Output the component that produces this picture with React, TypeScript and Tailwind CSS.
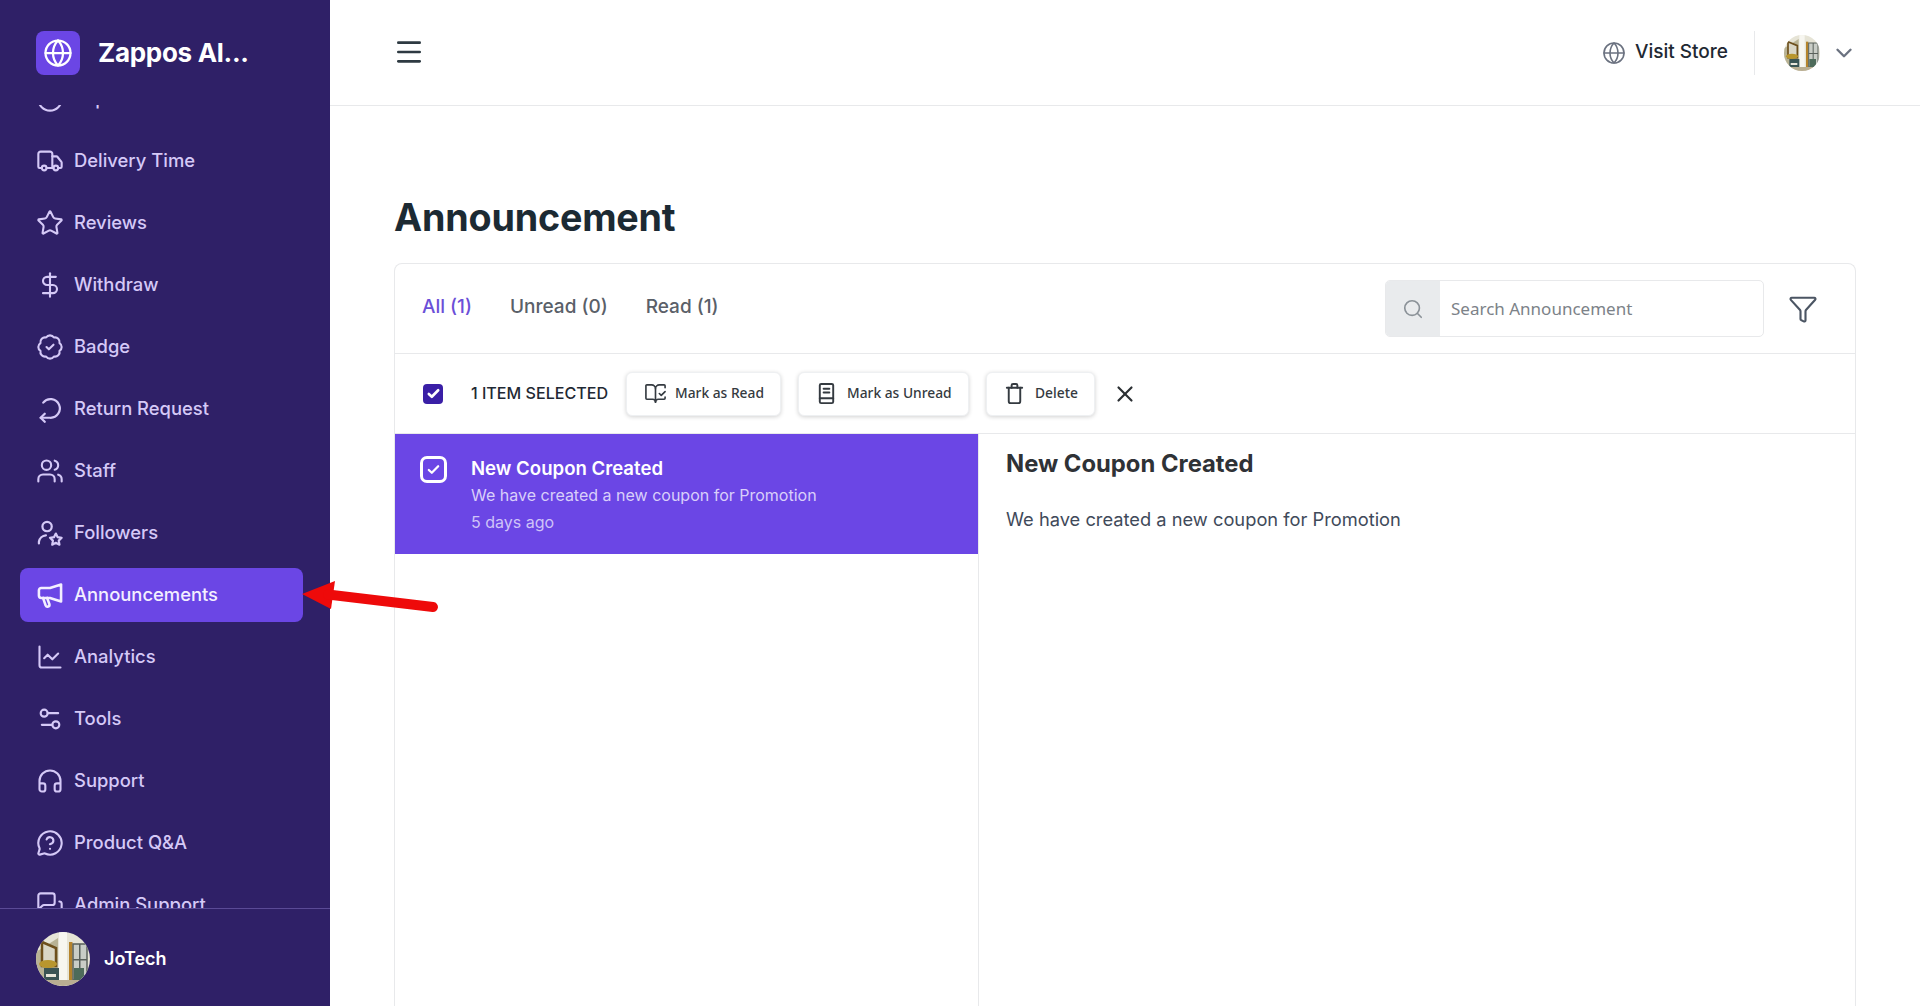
import {
  BadgeCheck,
  BookOpenCheck,
  ChartLine,
  ChevronDown,
  Circle,
  DollarSign,
  Funnel,
  Globe,
  Headphones,
  Menu,
  MessageCircleQuestion,
  MessagesSquare,
  Search,
  Settings2,
  Star,
  Truck,
  Users,
  X,
} from "lucide-react";
import type { ReactNode } from "react";

const ReturnIcon = ({ className }: { className?: string }) => (
  <svg className={className} viewBox="0 0 24 24" fill="none" stroke="currentColor" strokeWidth="1.900" strokeLinecap="round" strokeLinejoin="round">
    <path d="M6.200 6.500A8 8 0 1 1 12 19.500H4" />
    <path d="m7.500 16-3.500 3.500L7.500 23" />
  </svg>
);

const FollowersIcon = ({ className }: { className?: string }) => (
  <svg className={className} viewBox="0 0 24 24" fill="none" stroke="currentColor" strokeWidth="1.900" strokeLinecap="round" strokeLinejoin="round">
    <circle cx="9.500" cy="6.500" r="4" />
    <path d="M2.500 21v-1.500a6.500 6.500 0 0 1 6-5.500" />
    <path d="m17 12.500 1.600 3.100 3.400.5-2.500 2.400.6 3.500-3.100-1.600-3.100 1.600.6-3.500-2.500-2.400 3.400-.5z" />
  </svg>
);

const MegaphoneIcon = ({ className }: { className?: string }) => (
  <svg className={className} viewBox="0 0 24 24" fill="none" stroke="currentColor" strokeWidth="2.200" strokeLinecap="round" strokeLinejoin="round">
    <path d="M21.500 3v14.500L12 14.500H4.500A2 2 0 0 1 2.500 12.500V8a2 2 0 0 1 2-2H12z" />
    <path d="m6 14.500 2.300 6.500a1.700 1.700 0 0 0 3.200-1.100L9.500 14.500" />
  </svg>
);

const NoteBookIcon = ({ className }: { className?: string }) => (
  <svg className={className} viewBox="0 0 24 24" fill="none" stroke="currentColor" strokeWidth="2" strokeLinecap="round" strokeLinejoin="round">
    <path d="M6.500 2h11A1.500 1.500 0 0 1 19 3.500v17a1.500 1.500 0 0 1-1.500 1.500h-11A1.500 1.500 0 0 1 5 20.500v-17A1.500 1.500 0 0 1 6.500 2z" />
    <path d="M5 17h14" />
    <path d="M9 7h6" />
    <path d="M9 11h6" />
  </svg>
);

const TrashIcon = ({ className }: { className?: string }) => (
  <svg className={className} viewBox="0 0 24 24" fill="none" stroke="currentColor" strokeWidth="2" strokeLinecap="round" strokeLinejoin="round">
    <path d="M4 6h16" />
    <path d="M9 6V3.500A1.500 1.500 0 0 1 10.500 2h3A1.500 1.500 0 0 1 15 3.500V6" />
    <path d="M6 6v14a2 2 0 0 0 2 2h8a2 2 0 0 0 2-2V6" />
  </svg>
);

// small stand-in for the store owner's room photo
const RoomAvatar = ({ className, id }: { className?: string; id: string }) => (
  <svg className={className} viewBox="0 0 54 54">
    <defs>
      <clipPath id={id}>
        <circle cx="27" cy="27" r="27" />
      </clipPath>
    </defs>
    <g clipPath={`url(#${id})`}>
      <rect width="54" height="54" fill="#e6e4d6" />
      <path d="M0 20 22 6v44H0z" fill="#b8b294" />
      <path d="M6 10 20 16v18H6z" fill="#d9d6c6" stroke="#6d4f1c" strokeWidth="2.500" />
      <rect x="23" y="0" width="8" height="54" fill="#f7f6f0" />
      <rect x="33" y="10" width="3.500" height="42" fill="#b5842c" />
      <rect x="37" y="12" width="14" height="36" fill="#c9cdc6" stroke="#59605a" strokeWidth="1.500" />
      <rect x="43" y="12" width="1.500" height="36" fill="#59605a" />
      <rect x="37" y="27" width="14" height="1.500" fill="#59605a" />
      <ellipse cx="12" cy="32" rx="9" ry="4" fill="#b8962e" />
      <rect x="8" y="36" width="15" height="12" fill="#3a5454" />
      <rect x="10" y="42" width="10" height="3" fill="#e8e6da" />
      <rect x="38" y="36" width="10" height="12" fill="#4d6b5a" />
      <rect x="0" y="48" width="54" height="6" fill="#b9ae92" />
    </g>
  </svg>
);

type NavItem = { label: string; icon: ReactNode; active?: boolean };

const iconCls = "w-[28px] h-[28px] shrink-0";

const navItems: NavItem[] = [
  { label: "Expenses", icon: <Circle className={iconCls} strokeWidth={1.8} /> },
  { label: "Delivery Time", icon: <Truck className={iconCls} strokeWidth={1.8} /> },
  { label: "Reviews", icon: <Star className={iconCls} strokeWidth={1.8} /> },
  { label: "Withdraw", icon: <DollarSign className={iconCls} strokeWidth={1.8} /> },
  { label: "Badge", icon: <BadgeCheck className={iconCls} strokeWidth={1.8} /> },
  { label: "Return Request", icon: <ReturnIcon className={iconCls} /> },
  { label: "Staff", icon: <Users className={iconCls} strokeWidth={1.8} /> },
  { label: "Followers", icon: <FollowersIcon className={iconCls} /> },
  { label: "Announcements", icon: <MegaphoneIcon className={iconCls} />, active: true },
  { label: "Analytics", icon: <ChartLine className={iconCls} strokeWidth={1.8} /> },
  { label: "Tools", icon: <Settings2 className={iconCls} strokeWidth={1.8} /> },
  { label: "Support", icon: <Headphones className={iconCls} strokeWidth={1.8} /> },
  { label: "Product Q&A", icon: <MessageCircleQuestion className={iconCls} strokeWidth={1.8} /> },
  { label: "Admin Support", icon: <MessagesSquare className={iconCls} strokeWidth={1.8} /> },
];

const Sidebar = () => (
  <aside className="w-[330px] shrink-0 h-full bg-[#2f2067] flex flex-col">
    <div className="h-[105px] shrink-0 flex items-center gap-[18px] pl-[36px]">
      <div className="w-[44px] h-[44px] rounded-[8px] bg-[#6b46e5] flex items-center justify-center text-white">
        <Globe className="w-[30px] h-[30px]" strokeWidth={1.8} />
      </div>
      <span className="text-[26px] font-bold text-white leading-none tracking-[-0.3px]">Zappos Al...</span>
    </div>
    <nav className="flex-1 min-h-0 overflow-hidden px-[20px]">
      <div className="flex flex-col gap-[8px] mt-[-33.5px]">
        {navItems.map((item) => (
          <div
            key={item.label}
            className={
              item.active
                ? "h-[54px] w-[283px] shrink-0 rounded-[8px] bg-[#6b46e5] flex items-center gap-[10px] pl-[16px] text-[#f3efff]"
                : "h-[54px] w-[283px] shrink-0 rounded-[8px] flex items-center gap-[10px] pl-[16px] text-[#d5c9f7]"
            }
          >
            {item.icon}
            <span className="text-[18.4px] font-medium">{item.label}</span>
          </div>
        ))}
      </div>
    </nav>
    <div className="h-[98px] shrink-0 border-t border-[#5a4a96] flex items-center gap-[14px] pl-[36px] pt-[2px]">
      <RoomAvatar id="room-side" className="w-[54px] h-[54px]" />
      <span className="text-[18px] font-semibold text-white">JoTech</span>
    </div>
  </aside>
);

const Header = () => (
  <header className="h-[106px] shrink-0 border-b border-[#e8e9eb] flex items-center justify-between pl-[63px] pr-[63px]">
    <Menu className="w-[32px] h-[32px] text-[#2e3a42] mt-[-1px]" strokeWidth={2} />
    <div className="flex items-center">
      <Globe className="w-[24px] h-[24px] text-[#6b7280]" strokeWidth={1.6} />
      <span className="ml-[9px] text-[19px] font-medium text-[#1f2933]">Visit Store</span>
      <div className="w-px h-[44px] bg-[#e8e9eb] ml-[26px]" />
      <RoomAvatar id="room-top" className="w-[36px] h-[36px] ml-[29px]" />
      <ChevronDown className="w-[26px] h-[26px] ml-[11px] text-[#6b7280]" strokeWidth={2.2} />
    </div>
  </header>
);

const ActionButton = ({ icon, label, className }: { icon: ReactNode; label: string; className: string }) => (
  <button className={"h-[44px] rounded-[6px] bg-white border border-[#eef0f2] shadow-[0_1px_4px_rgba(0,0,0,0.18)] flex items-center text-[13.8px] font-medium text-[#343a40] font-['Noto_Sans',sans-serif] " + className}>
    {icon}
    {label}
  </button>
);

const Card = () => (
  <section className="flex-1 min-h-0 rounded-t-[8px] border border-b-0 border-[#e8e9eb] flex flex-col">
    <div className="h-[90px] shrink-0 border-b border-[#e8e9eb] flex items-center pl-[27px] pr-[37px]">
      <div className="flex gap-[38px] text-[19px] font-medium text-[#5a6068] mt-[-2px]">
        <span className="text-[#6b4fd8]">All (1)</span>
        <span>Unread (0)</span>
        <span>Read (1)</span>
      </div>
      <div className="ml-auto flex items-center">
        <div className="w-[379px] h-[57px] rounded-[5px] border border-[#e8e9eb] flex overflow-hidden">
          <div className="w-[54px] bg-[#e9ebed] flex items-center justify-center">
            <Search className="w-[22px] h-[22px] text-[#8b9298]" strokeWidth={1.8} />
          </div>
          <input
            readOnly
            placeholder="Search Announcement"
            className="flex-1 pl-[11px] outline-none text-[17px] placeholder:text-[#7c8288] font-['Noto_Sans',sans-serif]"
          />
        </div>
        <Funnel className="w-[30px] h-[30px] ml-[24px] text-[#4b5563]" strokeWidth={1.7} />
      </div>
    </div>
    <div className="h-[80px] shrink-0 border-b border-[#e8e9eb] flex items-center pl-[28px]">
      <div className="w-[20px] h-[20px] rounded-[4px] bg-[#3a1fa6] flex items-center justify-center">
        <svg viewBox="0 0 16 16" className="w-[15px] h-[15px]" fill="none" stroke="white" strokeWidth="2.800" strokeLinecap="round" strokeLinejoin="round">
          <path d="m3 8.500 3.200 3L13 4.500" />
        </svg>
      </div>
      <span className="ml-[28px] w-[137px] text-[16.1px] font-medium text-[#1f2933] whitespace-nowrap">1 ITEM SELECTED</span>
      <ActionButton
        className="ml-[18px] w-[155px] pl-[17px] gap-[8px]"
        icon={<BookOpenCheck className="w-[23px] h-[23px]" strokeWidth={1.7} />}
        label="Mark as Read"
      />
      <ActionButton
        className="ml-[17px] w-[171px] pl-[16px] gap-[9px]"
        icon={<NoteBookIcon className="w-[23px] h-[23px]" />}
        label="Mark as Unread"
      />
      <ActionButton
        className="ml-[17px] w-[109px] pl-[16px] gap-[9px]"
        icon={<TrashIcon className="w-[23px] h-[23px]" />}
        label="Delete"
      />
      <X className="w-[26px] h-[26px] ml-[17px] text-[#2b2f33]" strokeWidth={2} />
    </div>
    <div className="flex-1 min-h-0 flex">
      <div className="w-[584px] shrink-0 border-r border-[#e8e9eb]">
        <div className="h-[120px] bg-[#6b46e5] flex pl-[25px] pt-[22px] text-white">
          <div className="w-[27px] h-[27px] rounded-[7px] border-[3.5px] border-white flex items-center justify-center shrink-0">
            <svg viewBox="0 0 16 16" className="w-[15px] h-[15px]" fill="none" stroke="white" strokeWidth="2.400" strokeLinecap="round" strokeLinejoin="round">
              <path d="m3 8.500 3.200 3L13 4.500" />
            </svg>
          </div>
          <div className="ml-[24px] mt-[-1px]">
            <div className="text-[18.6px] font-semibold leading-[27px]">New Coupon Created</div>
            <div className="text-[16px] leading-[27px] text-[#d9cffa]">We have created a new coupon for Promotion</div>
            <div className="text-[16px] leading-[27px] text-[#cfc3f8]">5 days ago</div>
          </div>
        </div>
      </div>
      <div className="flex-1 pl-[27px] pt-[12px]">
        <h2 className="text-[23.8px] font-bold leading-[36px] text-[#2f3236]">New Coupon Created</h2>
        <p className="mt-[24px] text-[18.3px] leading-[27px] text-[#3f4a5a]">We have created a new coupon for Promotion</p>
      </div>
    </div>
  </section>
);

const App = () => (
  <div className="relative h-screen w-full overflow-hidden flex bg-white font-['Inter',sans-serif]">
    <Sidebar />
    <main className="flex-1 min-w-0 flex flex-col">
      <Header />
      <div className="flex-1 min-h-0 flex flex-col px-[64px] pt-[82px]">
        <h1 className="text-[37.7px] font-bold leading-[58px] text-[#1c2a33] mb-[17px] tracking-[-0.2px]">Announcement</h1>
        <Card />
      </div>
    </main>
    {/* red annotation arrow drawn on top of the screenshot */}
    <svg className="absolute left-[296px] top-[575px] w-[150px] h-[42px]" viewBox="0 0 150 42">
      <path d="M6 19 39 6 35 34z" fill="#ee0a0a" />
      <path d="M32 19.500 137 32" stroke="#ee0a0a" strokeWidth="10" strokeLinecap="round" />
    </svg>
  </div>
);

export default App;
